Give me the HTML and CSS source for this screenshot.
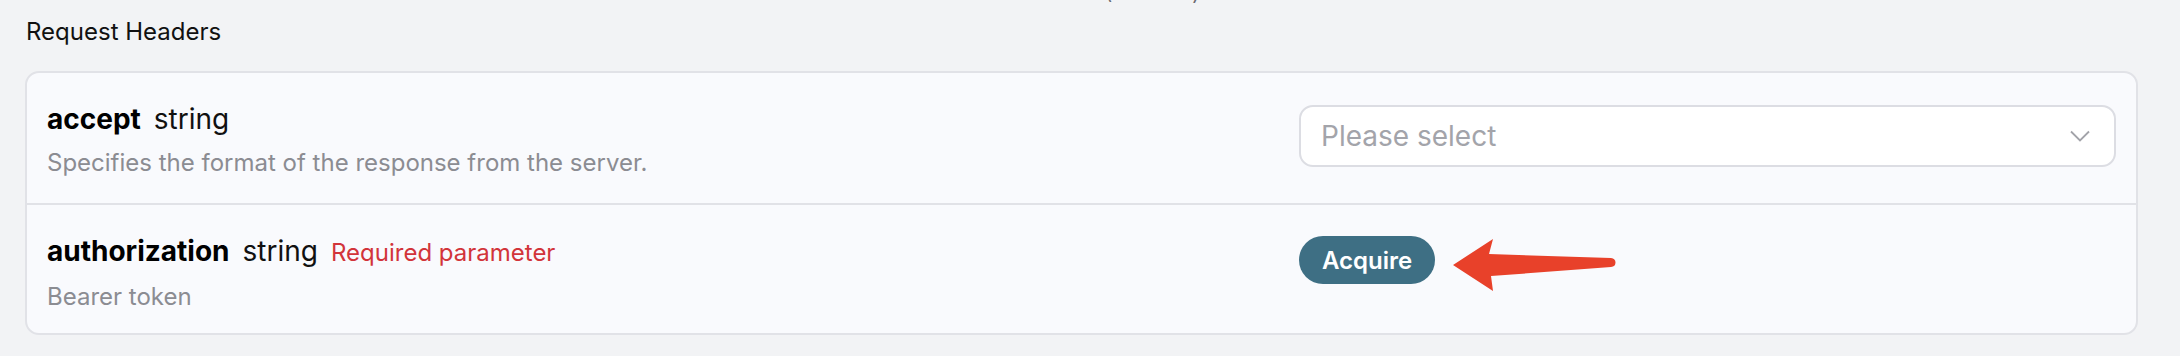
FILE: index.html
```html
<!DOCTYPE html>
<html lang="en">
<head>
    <meta charset="UTF-8">
    <meta name="viewport" content="width=device-width, initial-scale=1.0">
    <title>Request Headers</title>
    <link rel="stylesheet" href="styles.css">
</head>
<body>
    <div class="crumb">(Headers)</div>
    <div class="section-title">Request Headers</div>
    <div class="param-card">
        <div class="param-row">
            <div class="param-info">
                <div class="param-head">
                    <span class="param-name">accept</span>
                    <span class="param-type">string</span>
                </div>
                <div class="param-desc">Specifies the format of the response from the server.</div>
            </div>
            <div class="param-control">
                <div class="select-box">
                    <span class="placeholder">Please select</span>
                    <svg class="chevron" width="20" height="12" viewBox="0 0 20 12">
                        <path d="M1 1.5 L10 10.5 L19 1.5" fill="none" stroke="#a2a3a9" stroke-width="1.8"/>
                    </svg>
                </div>
            </div>
        </div>
        <div class="param-row">
            <div class="param-info">
                <div class="param-head">
                    <span class="param-name">authorization</span>
                    <span class="param-type">string</span>
                    <span class="param-required">Required parameter</span>
                </div>
                <div class="param-desc">Bearer token</div>
            </div>
            <div class="param-control">
                <button class="acquire-btn">Acquire</button>
                <svg class="pointer-arrow" width="170" height="58" viewBox="0 0 170 58">
                    <path d="M3 29 L43 3 L39 18 L161 22 Q165.5 22.5 165.5 26.5 Q165.5 30.5 161 31 L41 40 L43 55 Z" fill="#e8412a"/>
                </svg>
            </div>
        </div>
    </div>
</body>
</html>
```

FILE: styles.css
```css
body {
    margin: 0;
    font-family: Inter, "Noto Sans", sans-serif;
    background-color: #f2f3f5;
    color: #111;
    overflow: hidden;
}
.crumb {
    margin-top: -22px;
    margin-left: 1105px;
    font-size: 20px;
    line-height: 30px;
    color: #6a6b70;
}
.section-title {
    margin: 9px 0 0 26px;
    font-size: 24px;
    line-height: 30px;
    color: #111;
}
.param-card {
    margin: 24px 0 0 25px;
    width: 2113px;
    box-sizing: border-box;
    background-color: #f9fafd;
    border: 2px solid #e1e2e7;
    border-radius: 14px;
}
.param-row {
    display: grid;
    grid-template-columns: 1fr 817px;
    height: 130px;
    box-sizing: border-box;
    padding: 31px 20px 0 20px;
}
.param-row + .param-row {
    border-top: 2px solid #e1e2e7;
}
.param-head {
    display: flex;
    align-items: baseline;
    gap: 13px;
    line-height: 30px;
}
.param-name {
    font-size: 28px;
    font-weight: 700;
    color: #000;
}
.param-type {
    font-size: 28px;
    color: #111;
}
.param-required {
    font-size: 24px;
    color: #d2343a;
}
.param-desc {
    margin-top: 14px;
    font-size: 24px;
    line-height: 30px;
    color: #8b8c92;
}
.param-control {
    display: flex;
    align-items: flex-start;
}
.select-box {
    flex: 1;
    height: 62px;
    margin-top: 1px;
    box-sizing: border-box;
    display: flex;
    align-items: center;
    justify-content: space-between;
    padding: 0 24px 0 20px;
    background-color: #fff;
    border: 2px solid #dcdde3;
    border-radius: 14px;
}
.placeholder {
    font-size: 28px;
    color: #a3a4aa;
}
.acquire-btn {
    width: 136px;
    height: 48px;
    border: none;
    border-radius: 24px;
    background-color: #3e6f84;
    color: #fff;
    font-family: Inter, "Noto Sans", sans-serif;
    font-size: 24px;
    font-weight: 600;
    padding: 0;
    cursor: pointer;
}
.pointer-arrow {
    margin-left: 15px;
}
```
